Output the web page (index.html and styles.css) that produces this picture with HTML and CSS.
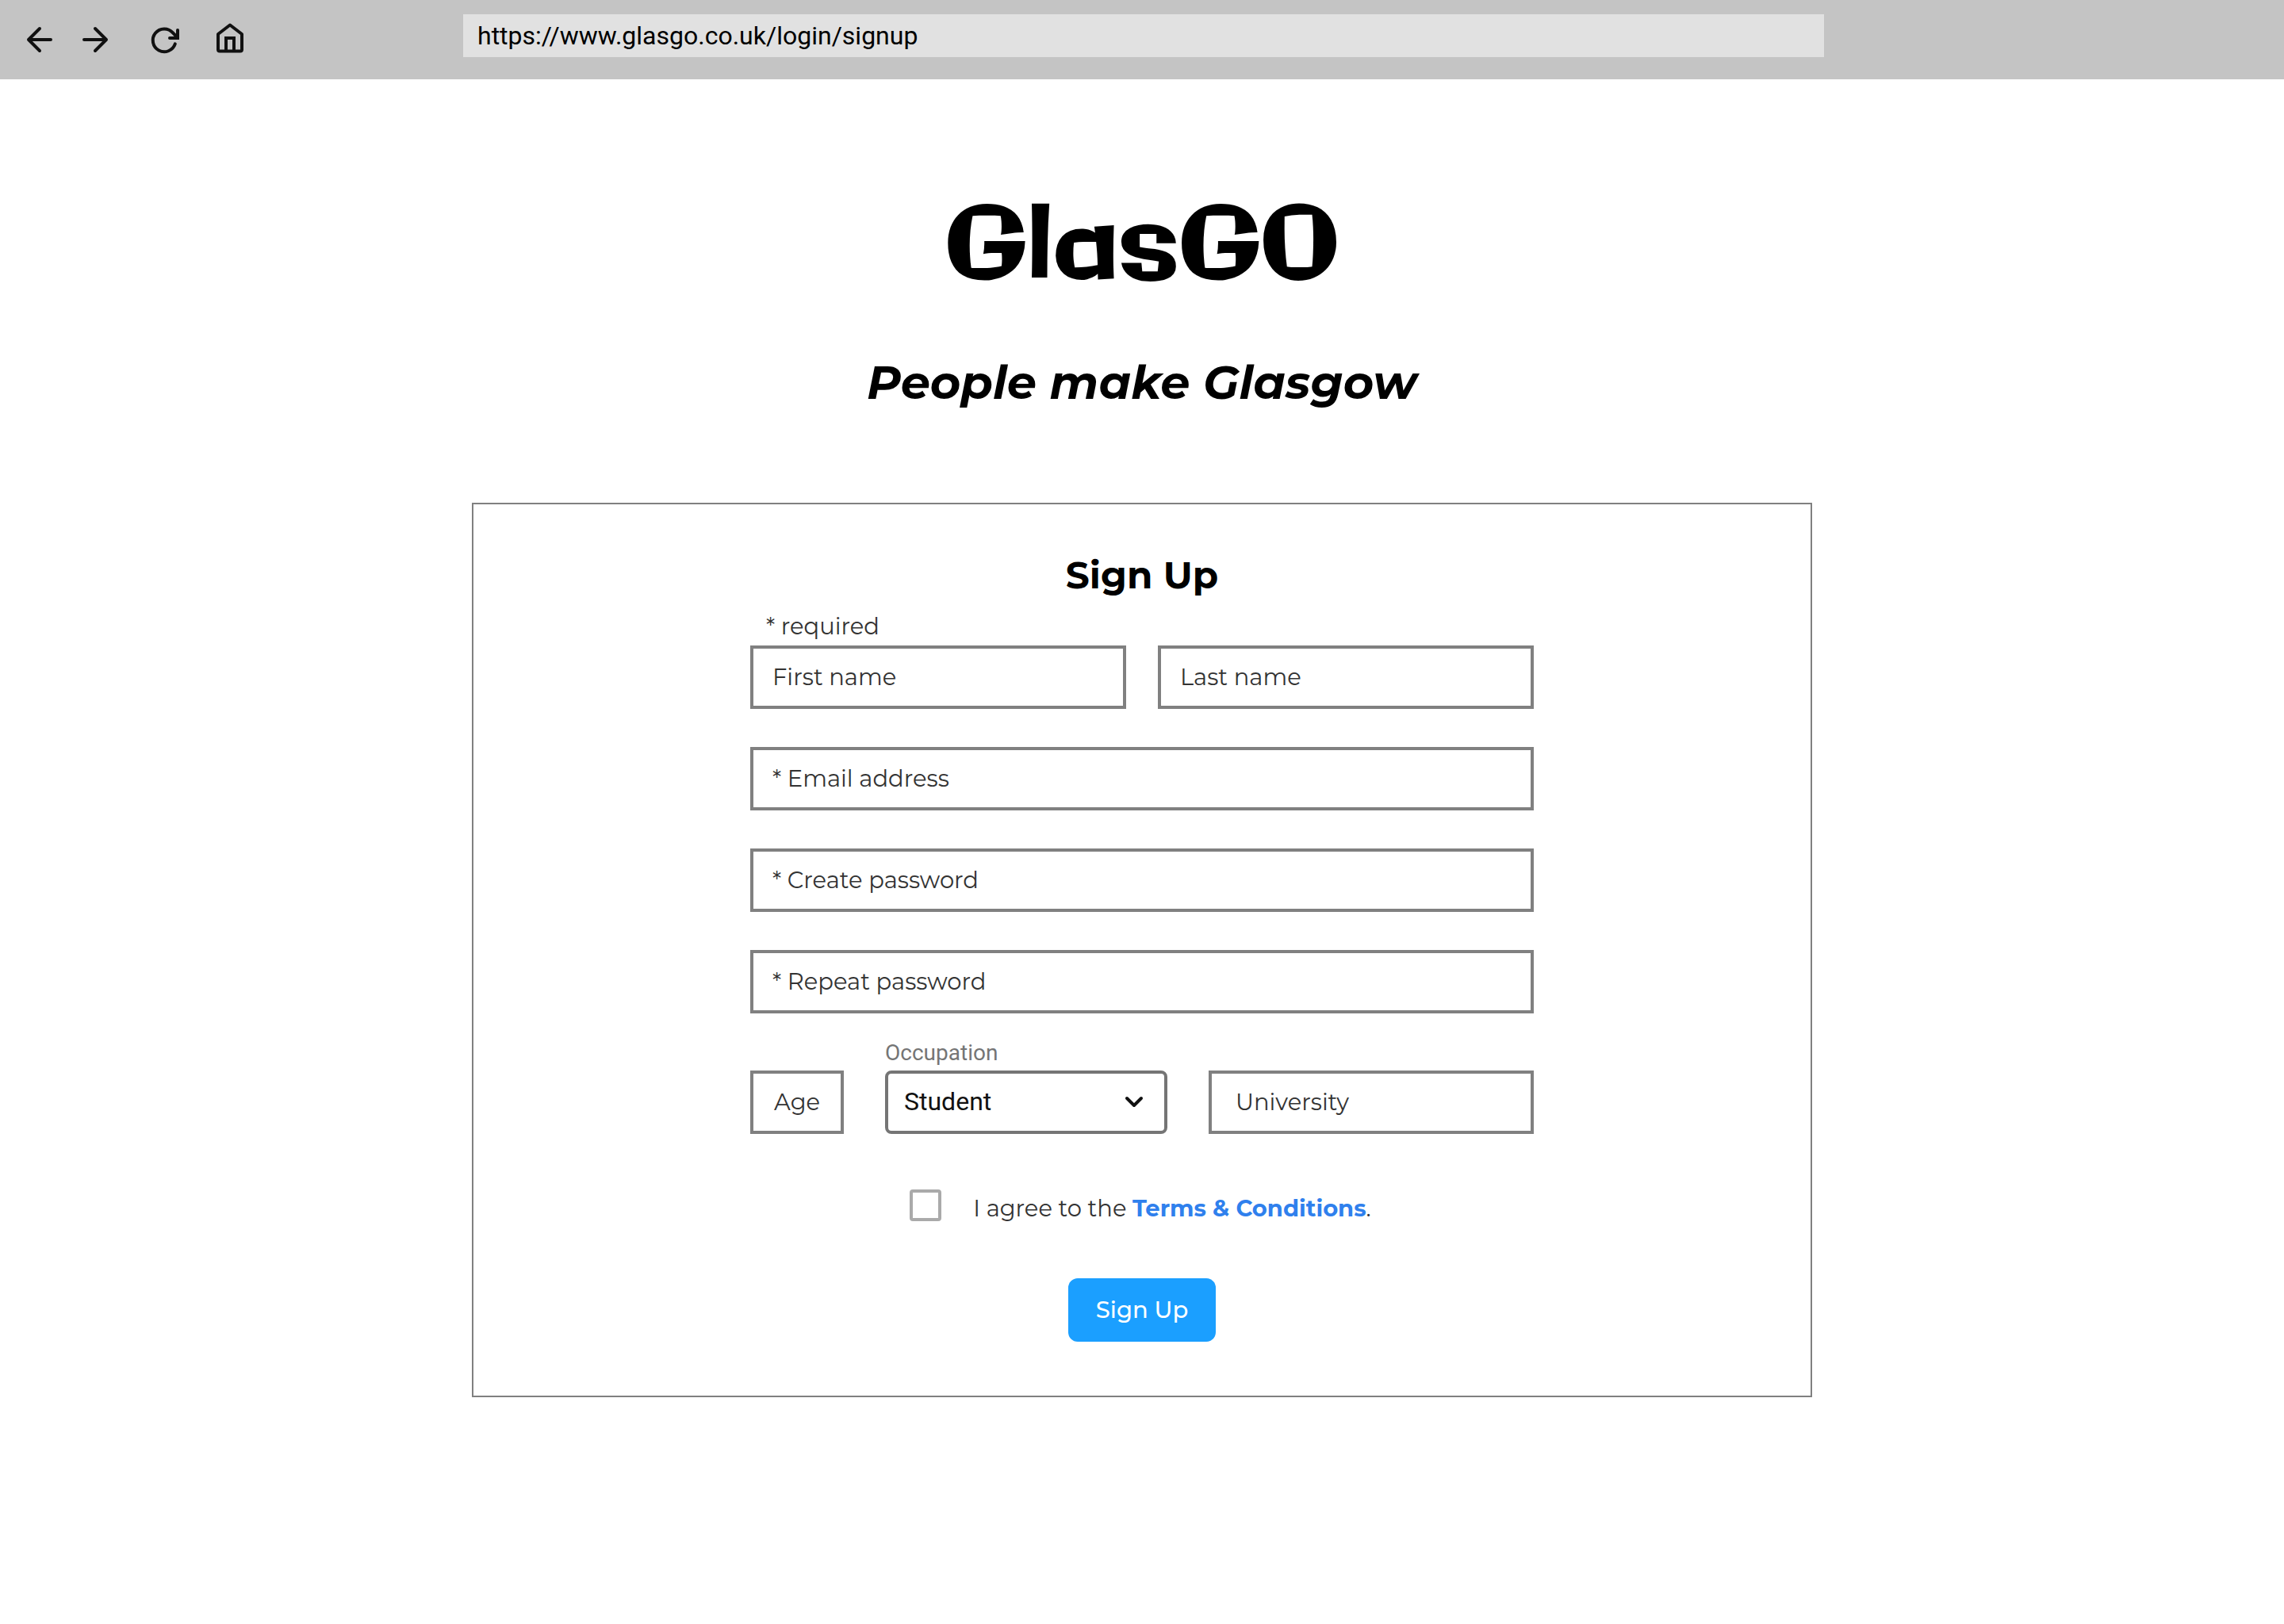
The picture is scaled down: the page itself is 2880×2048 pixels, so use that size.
FILE: index.html
```html
<!DOCTYPE html>
<html lang="en">
<head>
  <meta charset="utf-8">
  <meta name="viewport" content="width=device-width, initial-scale=1">
  <title>GlasGO – Sign Up</title>
  <link rel="stylesheet" href="styles.css">
</head>
<body>
  <header class="toolbar">
    <nav class="toolbar-nav" aria-label="Browser">
      <button class="icon-button" type="button" aria-label="Back">
        <svg class="icon" viewBox="0 0 48 48"><path d="M38 24H10M24 10L10 24l14 14"/></svg>
      </button>
      <button class="icon-button" type="button" aria-label="Forward">
        <svg class="icon" viewBox="0 0 48 48"><path d="M10 24h28M24 10l14 14-14 14"/></svg>
      </button>
      <div class="toolbar-group">
        <button class="icon-button" type="button" aria-label="Reload">
          <svg class="icon" viewBox="0 0 48 48"><path class="icon-sharp" d="M40 12v10H30"/><path d="M36.8 29.4A14.4 14.4 0 1 1 34 15.4L39 20.5"/></svg>
        </button>
        <button class="icon-button" type="button" aria-label="Home">
          <svg class="icon" viewBox="0 0 48 48"><path d="M9 17L24 5.5 39 17V36.5a2 2 0 0 1-2 2H11a2 2 0 0 1-2-2Z"/><path class="icon-sharp" d="M19 38V22h10v16"/></svg>
        </button>
      </div>
    </nav>
    <input class="address" type="text" aria-label="Address" value="https://www.glasgo.co.uk/login/signup">
  </header>

  <main class="page">
    <h1 class="logo">GlasGO</h1>
    <p class="tagline">People make Glasgow</p>

    <section class="card">
      <h2 class="card-title">Sign Up</h2>
      <form class="form">
        <p class="required">* required</p>
        <div class="row row-names">
          <input class="field" type="text" aria-label="First name" placeholder="First name">
          <input class="field" type="text" aria-label="Last name" placeholder="Last name">
        </div>
        <input class="field" type="email" aria-label="Email address" placeholder="* Email address">
        <input class="field" type="password" aria-label="Create password" placeholder="* Create password">
        <input class="field" type="password" aria-label="Repeat password" placeholder="* Repeat password">
        <div class="row row-about">
          <input class="field field-short" type="text" aria-label="Age" placeholder="Age">
          <div class="occupation">
            <label class="occupation-label" for="occupation">Occupation</label>
            <div class="select-box">
              <select class="select" id="occupation">
                <option>Student</option>
              </select>
              <svg class="chevron" viewBox="0 0 24 16"><path d="M3 3l9 9 9-9"/></svg>
            </div>
          </div>
          <input class="field field-wide-pad" type="text" aria-label="University" placeholder="University">
        </div>
        <div class="terms">
          <input class="checkbox" type="checkbox" id="terms">
          <label class="terms-label" for="terms">I agree to the <a class="link" href="#terms">Terms &amp; Conditions</a>.</label>
        </div>
        <button class="submit" type="submit">Sign Up</button>
      </form>
    </section>
  </main>
</body>
</html>
```
FILE: styles.css
```css
* {
  box-sizing: border-box;
}

body {
  margin: 0;
  background: #fff;
  color: #333;
  font-family: Montserrat, Inter, sans-serif;
  font-size: 29px;
  line-height: 40px;
}

h1, h2, p {
  margin: 0;
}

input, select, button {
  margin: 0;
  font: inherit;
}

/* Browser toolbar */
.toolbar {
  display: grid;
  grid-template-columns: 1fr minmax(0, 1716px) 1fr;
  align-items: start;
  padding: 18px 0 26px 4px;
  background: #c4c4c4;
}

.toolbar-nav {
  display: flex;
  gap: 22px;
  padding: 8px 22px 0;
}

.toolbar-group {
  display: flex;
  gap: 34px;
  margin-left: 18px;
}

.icon-button {
  width: 48px;
  height: 48px;
  padding: 0;
  border: 0;
  background: none;
}

.icon {
  display: block;
  width: 48px;
  height: 48px;
  fill: none;
  stroke: #111;
  stroke-width: 4;
  stroke-linecap: round;
  stroke-linejoin: round;
}

.icon-sharp {
  stroke-linejoin: miter;
}

.address {
  width: 100%;
  height: 54px;
  padding: 0 18px;
  border: 0;
  background: #e1e1e1;
  color: #000;
  font-family: Roboto, sans-serif;
  font-size: 32px;
}

/* Page */
.page {
  display: flex;
  flex-direction: column;
  align-items: center;
  padding: 136px 40px 80px;
}

.logo {
  color: #000;
  font-family: Galindo, Montserrat, Inter, sans-serif;
  font-size: 128px;
  font-weight: 400;
  line-height: 160px;
}

.tagline {
  margin-top: 46px;
  color: #000;
  font-size: 59px;
  font-style: italic;
  font-weight: 700;
  line-height: 80px;
}

.card {
  display: flex;
  flex-direction: column;
  align-items: center;
  width: 100%;
  max-width: 1690px;
  margin-top: 112px;
  padding: 60px 40px 68px;
  border: 2px solid #808080;
}

.card-title {
  color: #000;
  font-size: 47px;
  font-weight: 700;
  line-height: 60px;
}

.form {
  display: flex;
  flex-direction: column;
  gap: 48px;
  width: 100%;
  max-width: 988px;
}

.required {
  margin: 14px 0 -44px;
  padding-left: 20px;
}

.row {
  display: grid;
}

.row-names {
  grid-template-columns: 1fr 1fr;
  gap: 40px;
}

.row-about {
  grid-template-columns: 118fr 356fr 410fr;
  align-items: end;
  gap: 52px;
  margin-top: -16px;
}

.field {
  width: 100%;
  min-width: 0;
  height: 80px;
  padding: 0 24px 2px;
  border: 4px solid #808080;
  border-radius: 0;
  background: #fff;
  color: #333;
}

.field::placeholder {
  color: #333;
  opacity: 1;
}

.field-short {
  padding: 0 12px 2px;
  text-align: center;
}

.field-wide-pad {
  padding: 0 30px 2px;
}

.occupation {
  font-family: Roboto, sans-serif;
}

.occupation-label {
  display: block;
  margin-bottom: 4px;
  color: #757575;
  font-size: 28px;
  line-height: 36px;
}

.select-box {
  display: grid;
  align-items: center;
}

.select {
  grid-area: 1 / 1;
  width: 100%;
  height: 80px;
  padding: 0 20px 2px;
  border: 4px solid #757575;
  border-radius: 8px;
  background: #fff;
  color: #111;
  font-size: 32px;
  appearance: none;
}

.chevron {
  grid-area: 1 / 1;
  justify-self: end;
  width: 24px;
  height: 16px;
  margin-right: 30px;
  fill: none;
  stroke: #111;
  stroke-width: 4;
  stroke-linecap: round;
  stroke-linejoin: round;
  pointer-events: none;
}

.terms {
  display: flex;
  align-items: flex-start;
  justify-content: center;
  gap: 40px;
  margin-top: 22px;
  padding-right: 4px;
}

.terms-label {
  padding-top: 4px;
}

.checkbox {
  width: 40px;
  height: 40px;
  border: 4px solid #aaa;
  border-radius: 4px;
  background: #fff;
  appearance: none;
}

.checkbox:checked {
  background: #1b9fff;
}

.link {
  color: #2f80ed;
  font-weight: 700;
  text-decoration: none;
}

.submit {
  align-self: center;
  height: 80px;
  margin-top: 20px;
  padding: 0 35px;
  border: 0;
  border-radius: 12px;
  background: #1b9fff;
  color: #fff;
  font-weight: 500;
}
```
